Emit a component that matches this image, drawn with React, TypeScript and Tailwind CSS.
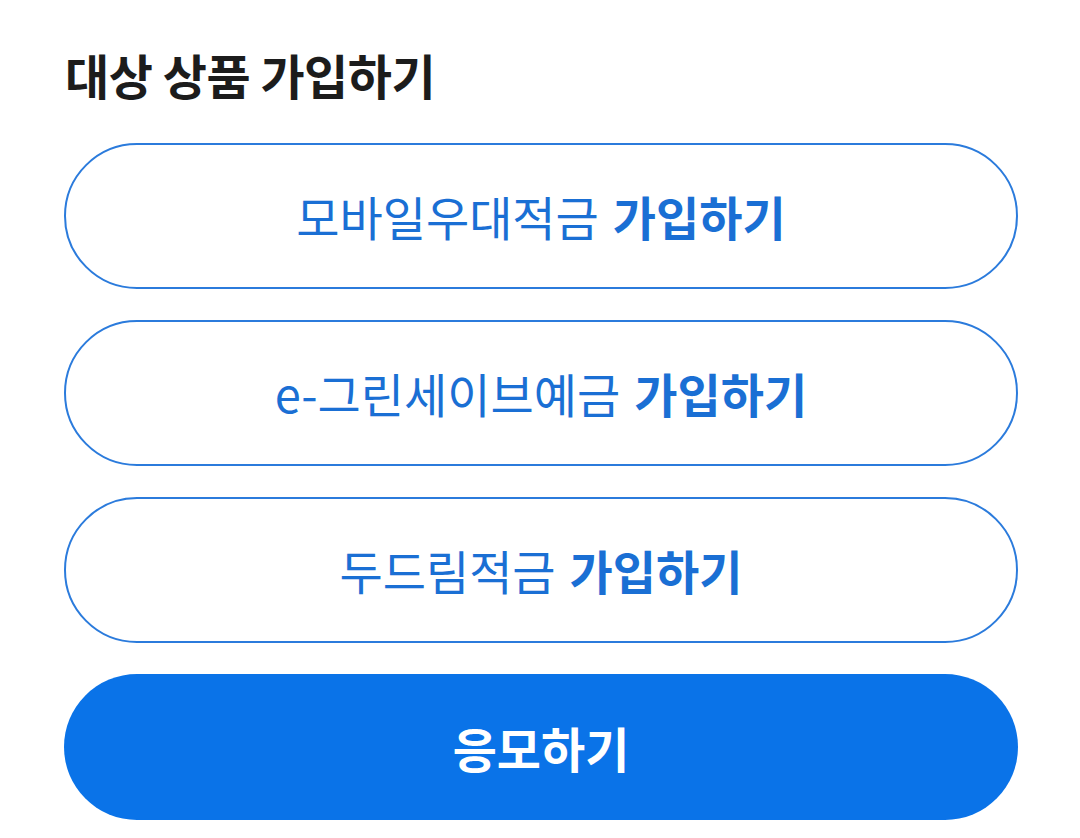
import React from 'react';

const products = ['모바일우대적금', 'e-그린세이브예금', '두드림적금'];

export default function App() {
  return (
    <div
      className="w-[1080px] h-[838px] bg-white pl-[64px] pr-[62px] pt-[42px]"
      style={{ fontFamily: '"Noto Sans CJK KR", "Noto Sans", sans-serif' }}
    >
      <h1 className="text-[48px] leading-[64px] font-bold text-[#1c1c1c] pl-[1px] tracking-[-0.5px]">
        대상 상품 가입하기
      </h1>
      <div className="mt-[37px] flex flex-col gap-[31px]">
        {products.map((name) => (
          <button
            key={name}
            className="h-[146px] w-full rounded-full border-2 border-[#2b7bdc] bg-white flex items-center justify-center text-[47px] text-[#1a6fd4]"
          >
            <span>{name}</span>
            <span className="font-bold ml-[14px]">가입하기</span>
          </button>
        ))}
        <button className="h-[146px] w-full rounded-full bg-[#0a73e8] flex items-center justify-center text-[48px] font-bold text-white">
          응모하기
        </button>
      </div>
    </div>
  );
}
